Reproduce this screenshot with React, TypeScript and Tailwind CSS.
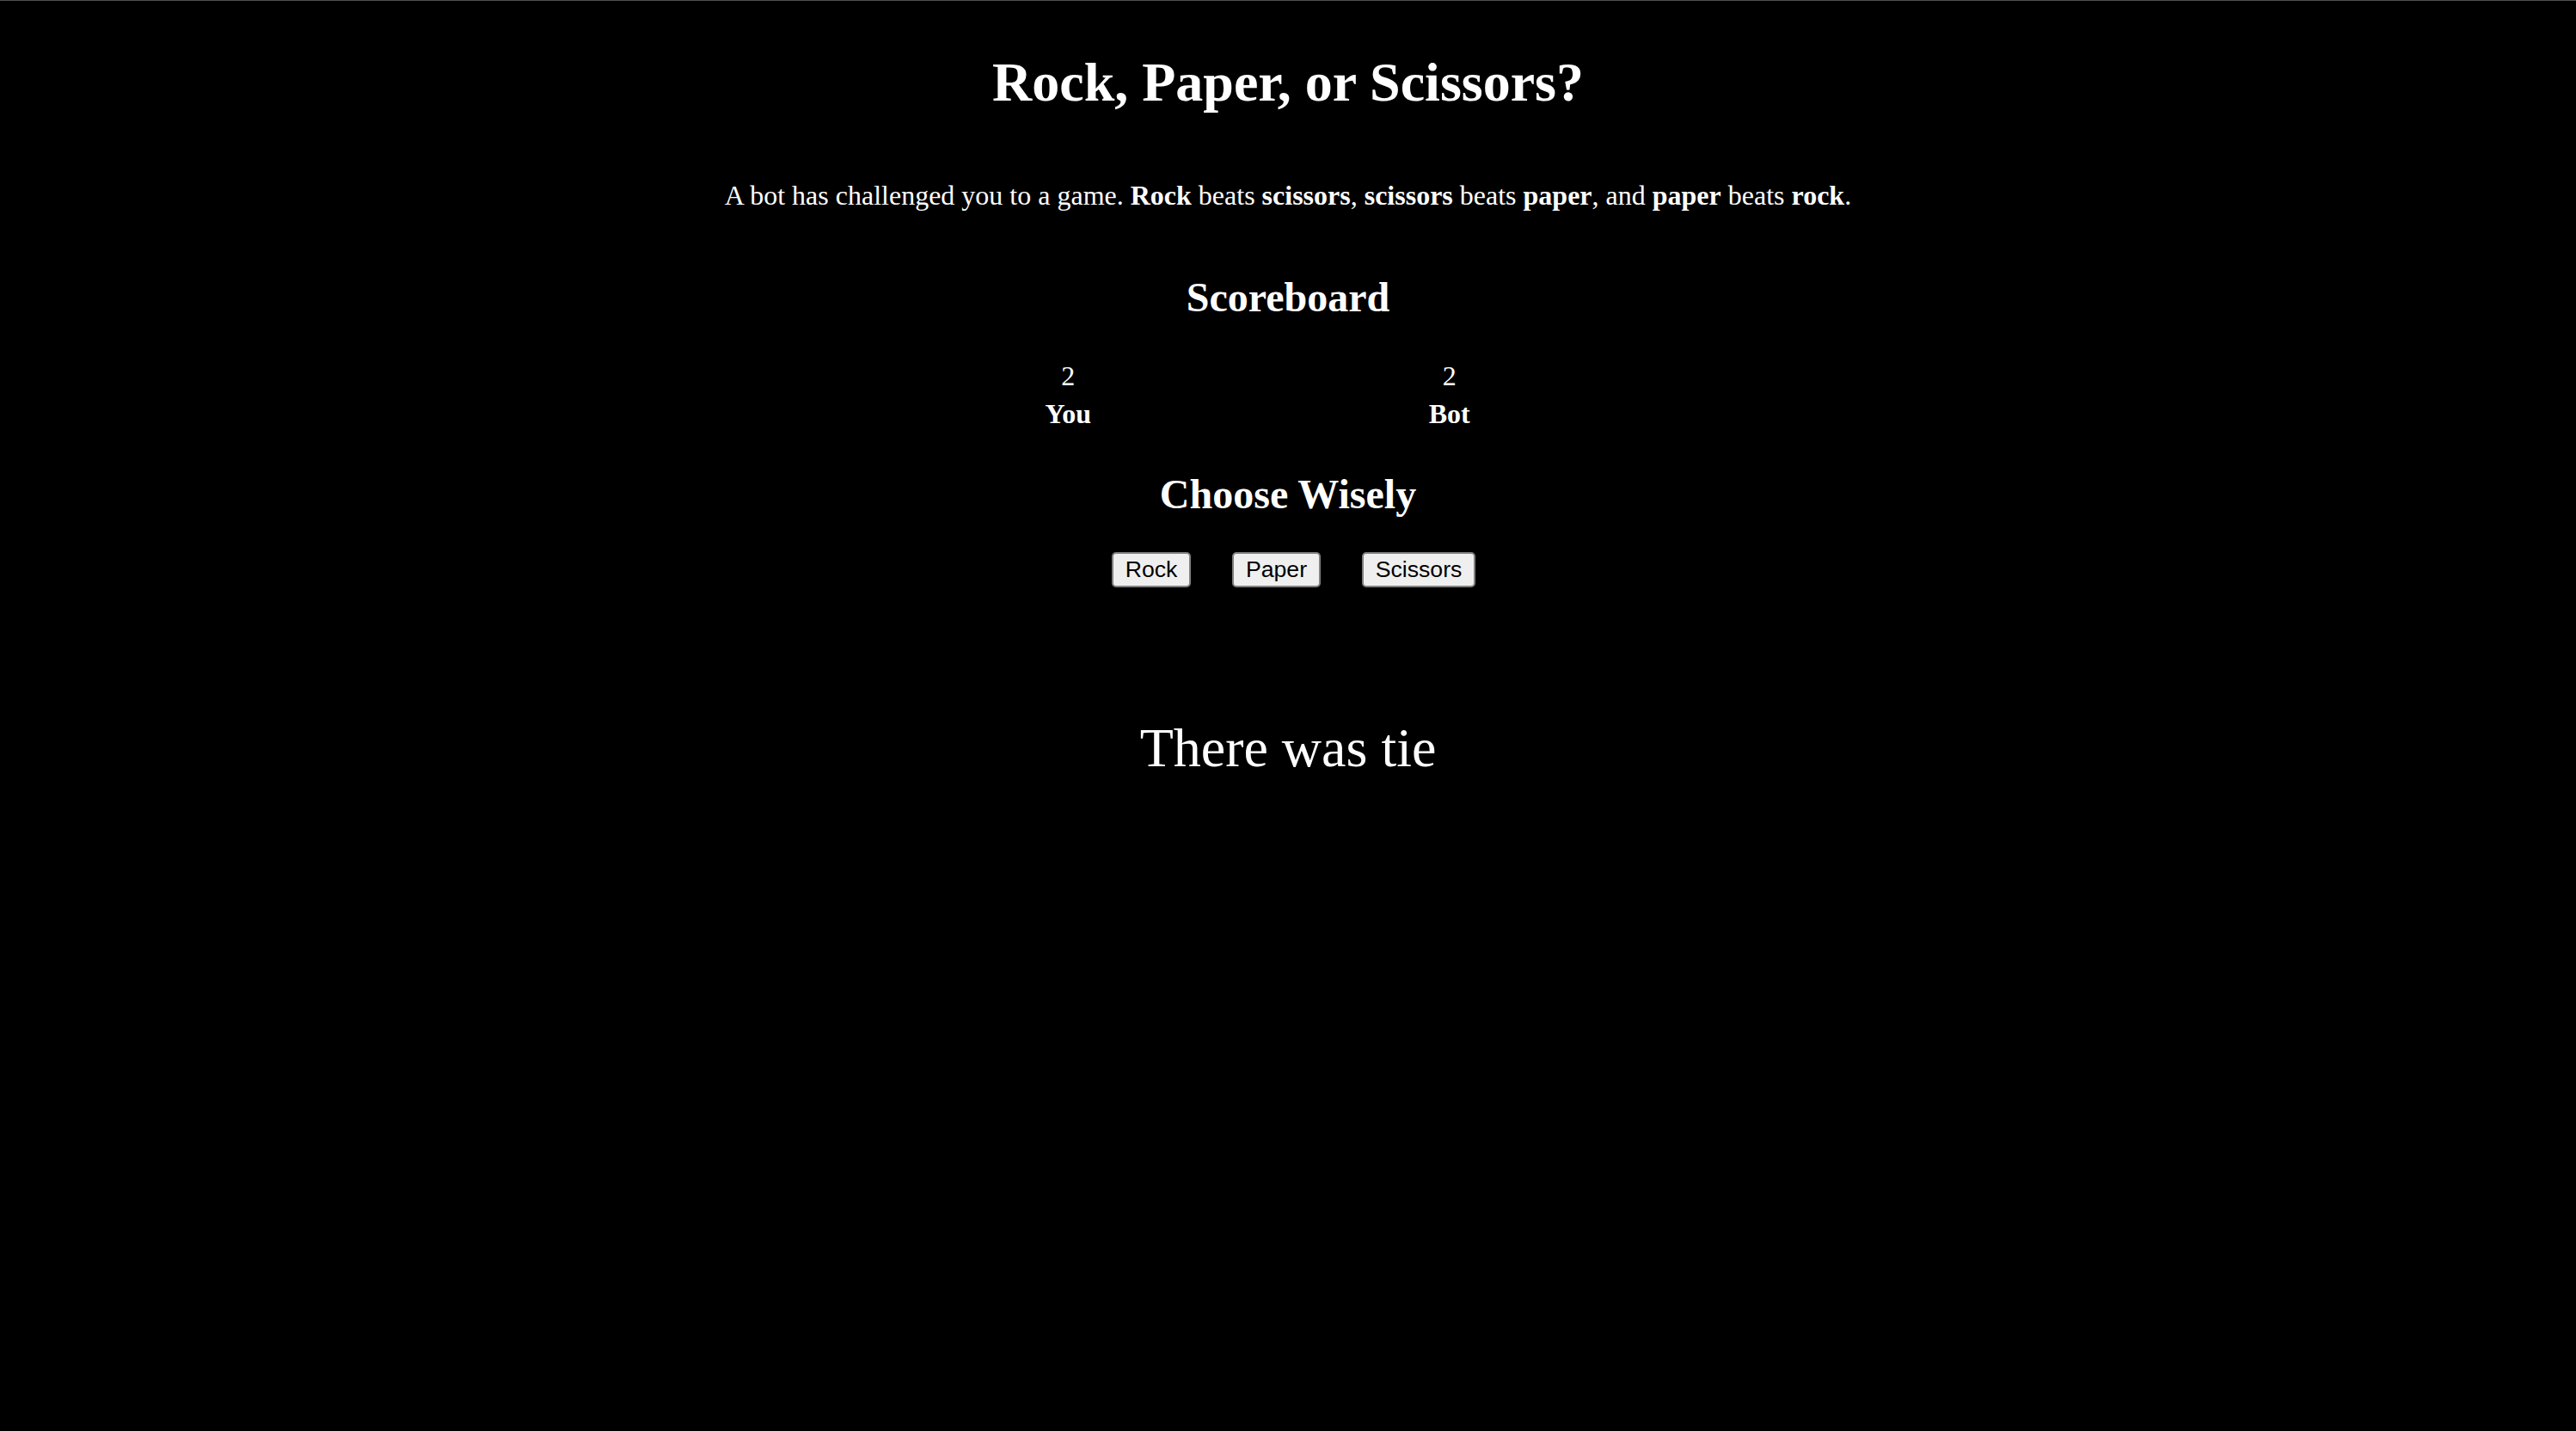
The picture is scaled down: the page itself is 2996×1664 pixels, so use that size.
import React from "react";

const serif = { fontFamily: '"Liberation Serif", "Times New Roman", serif' };

function Btn({ label, w }: { label: string; w: string }) {
  return (
    <button
      className={`${w} h-[41px] flex items-center justify-center bg-[#efefef] border-2 border-[#808080] rounded-[5px] text-black text-[26.67px] leading-none font-['Liberation_Sans',Arial,sans-serif]`}
    >
      {label}
    </button>
  );
}

export default function App() {
  return (
    <div
      className="min-h-[1664px] w-full bg-black text-white border-t border-[#505050] font-['Liberation_Serif','Times_New_Roman',serif]"
      style={serif}
    >
      <h1 className="mt-[63px] text-center text-[64px] font-bold leading-none">
        Rock, Paper, or Scissors?
      </h1>
      <p className="mt-[83px] text-center text-[32px] leading-none">
        A bot has challenged you to a game. <b>Rock</b> beats <b>scissors</b>,{" "}
        <b>scissors</b> beats <b>paper</b>, and <b>paper</b> beats <b>rock</b>.
      </p>
      <h2 className="mt-[79px] text-center text-[48px] font-bold leading-none">
        Scoreboard
      </h2>
      <div className="mt-[51px] flex justify-center">
        <div className="flex gap-[243.5px] pr-[68px]">
          <div className="w-[200px] flex flex-col items-center">
            <div className="text-[32px] leading-none">2</div>
            <div className="mt-[12px] text-[32px] leading-none font-bold">You</div>
          </div>
          <div className="w-[200px] flex flex-col items-center">
            <div className="text-[32px] leading-none">2</div>
            <div className="mt-[12px] text-[32px] leading-none font-bold">Bot</div>
          </div>
        </div>
      </div>
      <h2 className="mt-[54px] text-center text-[48px] font-bold leading-none">
        Choose Wisely
      </h2>
      <div className="mt-[43px] flex justify-center">
        <div className="flex gap-[48px] pl-[13px]">
          <Btn label="Rock" w="w-[92px]" />
          <Btn label="Paper" w="w-[103px]" />
          <Btn label="Scissors" w="w-[132px]" />
        </div>
      </div>
      <div className="mt-[155px] text-center text-[64px] leading-none">
        There was tie
      </div>
    </div>
  );
}
